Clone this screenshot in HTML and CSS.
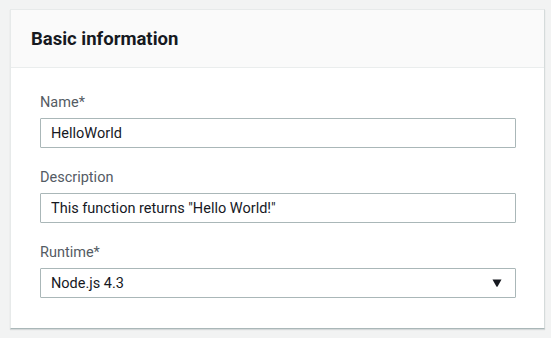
FILE: index.html
```html
<!DOCTYPE html>
<html lang="en">
<head>
    <meta charset="UTF-8">
    <meta name="viewport" content="width=device-width, initial-scale=1.0">
    <title>Basic information</title>
    <link rel="stylesheet" href="styles.css">
</head>
<body>
    <div class="card">
        <div class="card-header">
            <h2>Basic information</h2>
        </div>
        <form class="card-body">
            <div class="field">
                <label for="name">Name*</label>
                <input type="text" id="name" name="name" value="HelloWorld">
            </div>
            <div class="field">
                <label for="description">Description</label>
                <input type="text" id="description" name="description" value='This function returns "Hello World!"'>
            </div>
            <div class="field">
                <label for="runtime">Runtime*</label>
                <div class="select-wrap">
                    <select id="runtime" name="runtime">
                        <option value="nodejs4.3">Node.js 4.3</option>
                    </select>
                    <svg class="caret" width="10" height="8" viewBox="0 0 10 8"><path d="M0.5 0.5 H9.5 L5.6 7.4 Q5 8 4.4 7.4 Z" fill="#16191f"/></svg>
                </div>
            </div>
        </form>
    </div>
</body>
</html>
```

FILE: styles.css
```css
body {
    font-family: 'Roboto', sans-serif;
    background-color: #f2f3f3;
    margin: 0;
    padding: 9px 6px 10px 10px;
}

.card {
    background-color: #fff;
    border: 1px solid #e7eaea;
    border-bottom-color: #aab7b8;
    border-right-color: #d5dbdb;
    box-shadow: 0 1px 1px rgba(0, 28, 36, 0.12);
}

.card-header {
    background-color: #fafafa;
    border-bottom: 1px solid #eaeded;
    height: 57px;
    padding: 0 20px;
    display: flex;
    align-items: center;
}

.card-header h2 {
    margin: 0;
    font-size: 18.5px;
    font-weight: 700;
    color: #16191f;
}

.card-body {
    padding: 24px 28px 30px 29px;
    display: flex;
    flex-direction: column;
    gap: 19px;
}

.field label {
    display: block;
    font-size: 14.5px;
    line-height: 22px;
    color: #545b64;
    margin-bottom: 4px;
}

.field input[type="text"], .field select {
    display: block;
    width: 100%;
    height: 30px;
    box-sizing: border-box;
    border: 1px solid #aab7b8;
    border-radius: 1px;
    padding: 0 10px;
    font-family: inherit;
    font-size: 14.5px;
    color: #16191f;
    background-color: #fff;
    outline: none;
}

.select-wrap {
    position: relative;
}

.select-wrap select {
    appearance: none;
    -webkit-appearance: none;
}

.caret {
    position: absolute;
    right: 14px;
    top: 11px;
    pointer-events: none;
}
```
